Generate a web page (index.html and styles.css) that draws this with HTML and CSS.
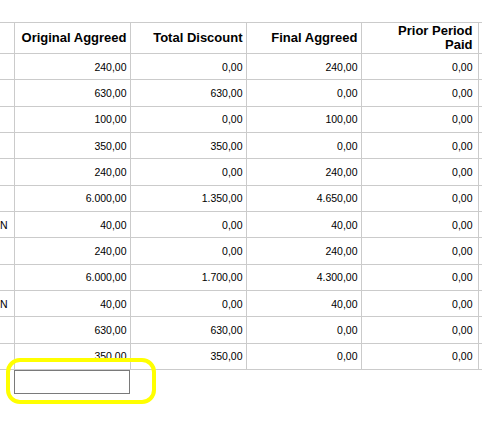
FILE: index.html
```html
<!DOCTYPE html>
<html>
<head>
<meta charset="utf-8">
<link rel="stylesheet" href="styles.css">
</head>
<body>
<div class="page">
  <div class="grid-wrap">
    <table class="grid">
      <colgroup>
        <col class="c-name">
        <col class="c-a">
        <col class="c-b">
        <col class="c-c">
        <col class="c-d">
        <col class="c-e">
      </colgroup>
      <thead>
        <tr>
          <th class="name"></th>
          <th>Original Aggreed</th>
          <th>Total Discount</th>
          <th>Final Aggreed</th>
          <th class="last">Prior Period<br>Paid</th>
          <th></th>
        </tr>
      </thead>
      <tbody>
        <tr><td class="name"></td><td>240,00</td><td>0,00</td><td>240,00</td><td class="last">0,00</td><td></td></tr>
        <tr><td class="name"></td><td>630,00</td><td>630,00</td><td>0,00</td><td class="last">0,00</td><td></td></tr>
        <tr><td class="name"></td><td>100,00</td><td>0,00</td><td>100,00</td><td class="last">0,00</td><td></td></tr>
        <tr><td class="name"></td><td>350,00</td><td>350,00</td><td>0,00</td><td class="last">0,00</td><td></td></tr>
        <tr><td class="name"></td><td>240,00</td><td>0,00</td><td>240,00</td><td class="last">0,00</td><td></td></tr>
        <tr><td class="name"></td><td>6.000,00</td><td>1.350,00</td><td>4.650,00</td><td class="last">0,00</td><td></td></tr>
        <tr><td class="name">N</td><td>40,00</td><td>0,00</td><td>40,00</td><td class="last">0,00</td><td></td></tr>
        <tr><td class="name"></td><td>240,00</td><td>0,00</td><td>240,00</td><td class="last">0,00</td><td></td></tr>
        <tr><td class="name"></td><td>6.000,00</td><td>1.700,00</td><td>4.300,00</td><td class="last">0,00</td><td></td></tr>
        <tr><td class="name">N</td><td>40,00</td><td>0,00</td><td>40,00</td><td class="last">0,00</td><td></td></tr>
        <tr><td class="name"></td><td>630,00</td><td>630,00</td><td>0,00</td><td class="last">0,00</td><td></td></tr>
        <tr><td class="name"></td><td>350,00</td><td>350,00</td><td>0,00</td><td class="last">0,00</td><td></td></tr>
      </tbody>
    </table>
  </div>
  <div class="footer">
    <input class="filter" type="text">
  </div>
  <div class="highlight"></div>
</div>
</body>
</html>
```

FILE: styles.css
```css
html, body {
  margin: 0;
  padding: 0;
  background: #ffffff;
}

body {
  font-family: "Liberation Sans", Arial, sans-serif;
  color: #000;
  overflow: hidden;
}

.page {
  position: relative;
  width: 482px;
  height: 424px;
  overflow: hidden;
}

.grid-wrap {
  overflow: hidden;
  width: 482px;
  padding-top: 22px;
}

.grid {
  border-collapse: collapse;
  table-layout: fixed;
  width: 578px;
}

.c-name { width: 14px; }
.c-a { width: 116px; }
.c-b { width: 116px; }
.c-c { width: 115px; }
.c-d { width: 117px; }
.c-e { width: 100px; }

.grid th,
.grid td {
  border: 1px solid #cbcbcb;
  text-align: right;
  vertical-align: middle;
  padding: 0 3px 0 3px;
  white-space: nowrap;
  overflow: hidden;
}

.grid th {
  font-size: 13px;
  font-weight: bold;
  line-height: 14px;
  height: 30px;
}

.grid td {
  font-size: 10.5px;
  line-height: 12px;
  height: 25.33px;
}

.grid .last {
  padding-right: 5px;
}

.grid .name {
  border-left: none;
  padding: 0 6px 0 0;
  overflow: visible;
}

.footer {
  display: flex;
  padding-left: 14px;
}

.filter {
  box-sizing: border-box;
  width: 116px;
  height: 24px;
  margin: 0;
  border: 1px solid #7a7a7a;
  border-radius: 0;
  padding: 0 3px;
  font-family: "Liberation Sans", Arial, sans-serif;
  font-size: 11px;
  background: #fff;
}

.highlight {
  position: absolute;
  left: 6px;
  top: 358px;
  width: 150px;
  height: 46px;
  box-sizing: border-box;
  border: 4px solid #ffff00;
  border-radius: 14px;
}
```
